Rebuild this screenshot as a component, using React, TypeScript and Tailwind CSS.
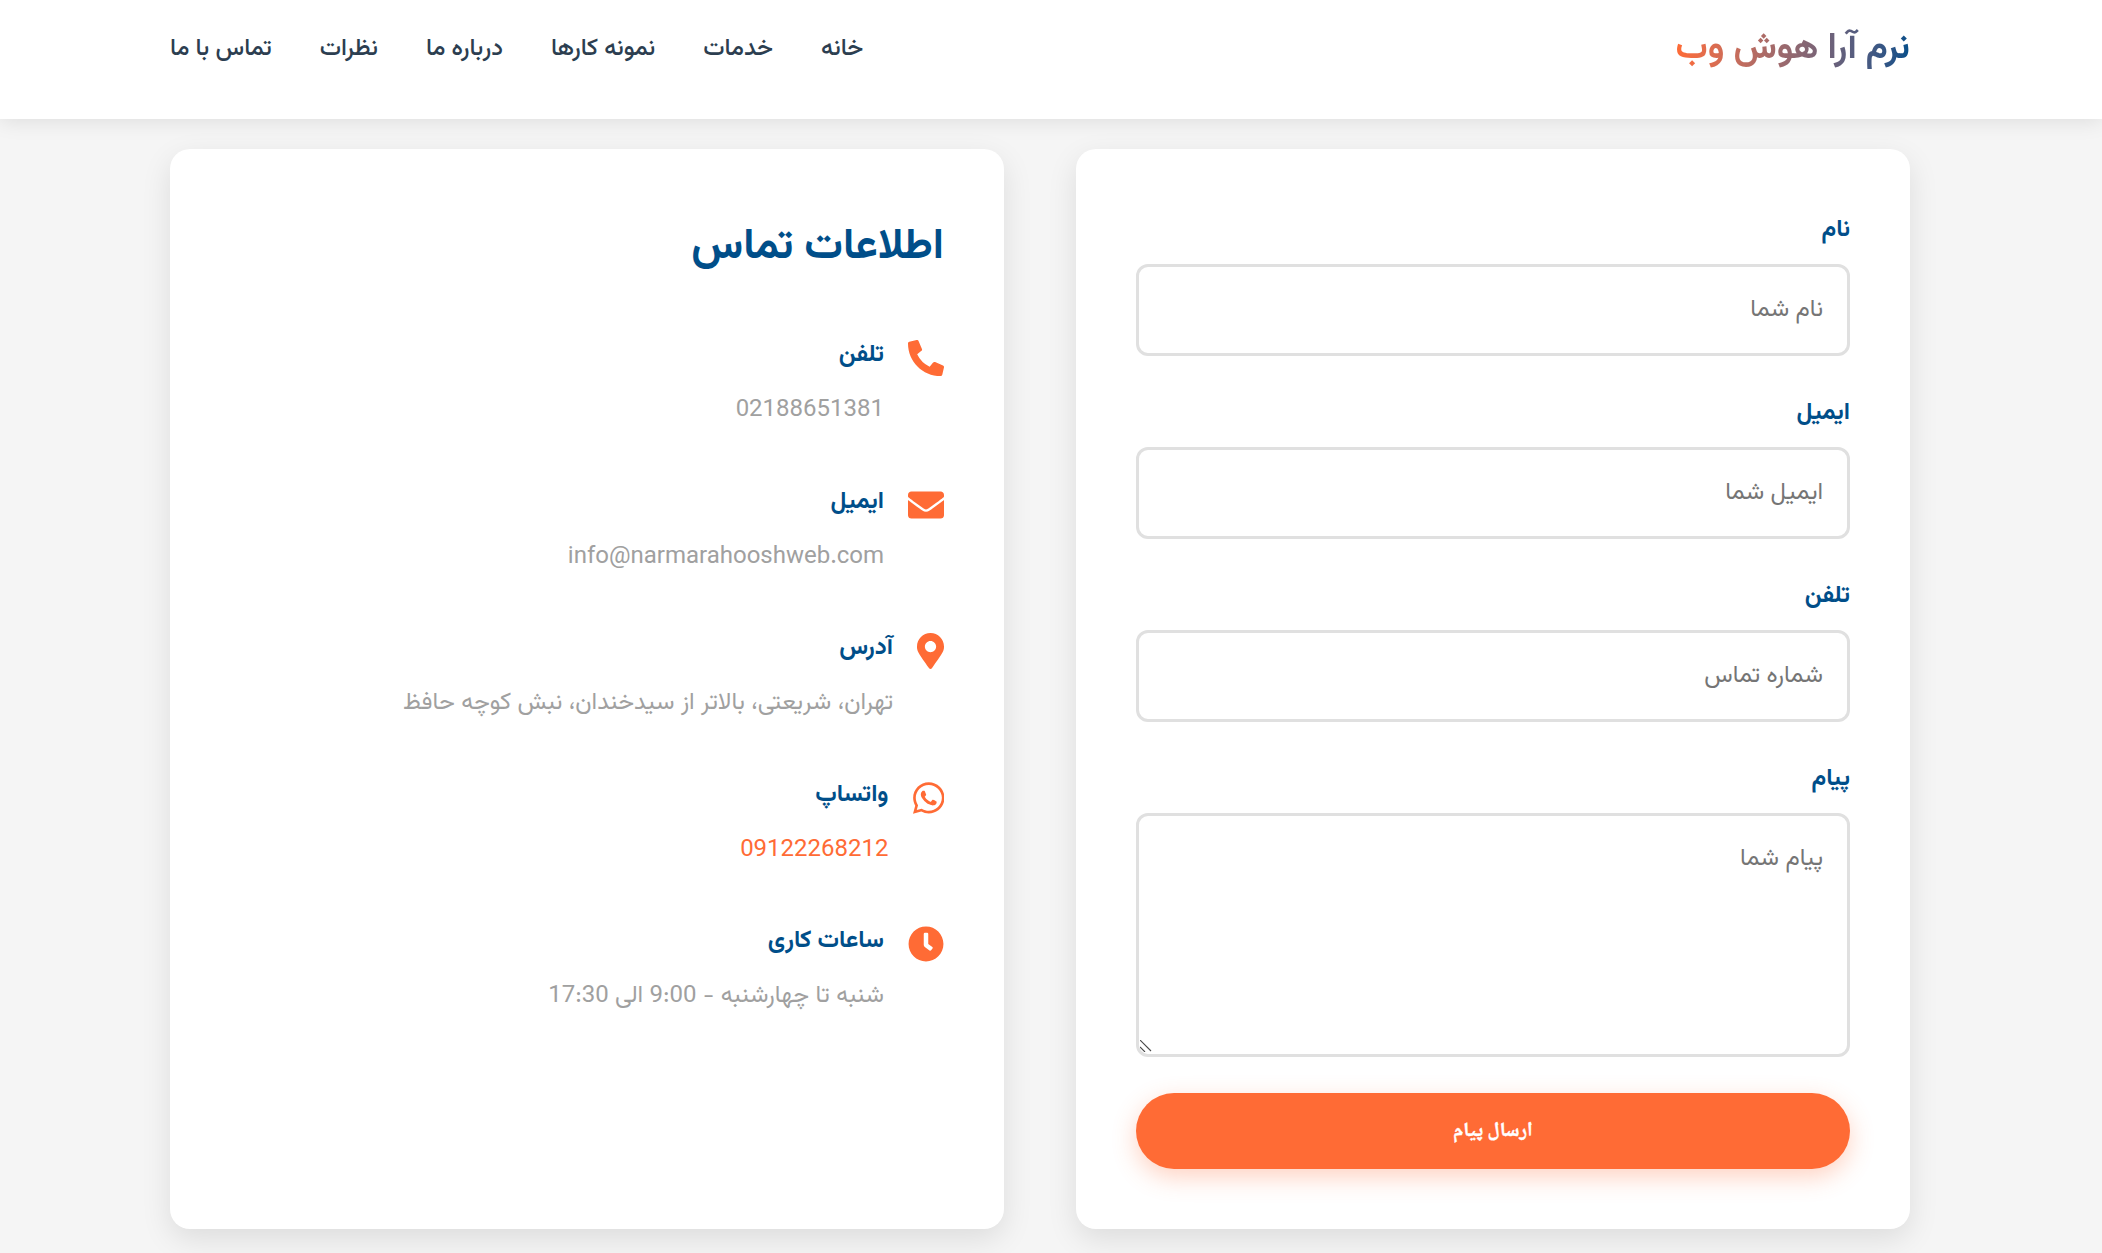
import React from "react";
import { FaPhoneAlt, FaEnvelope, FaMapMarkerAlt, FaWhatsapp, FaClock } from "react-icons/fa";

const nav = ["خانه", "خدمات", "نمونه کارها", "درباره ما", "نظرات", "تماس با ما"];

function Field({ label, placeholder, area }: { label: string; placeholder: string; area?: boolean }) {
  return (
    <div className="mb-[36px]">
      <label className="block mb-[12px] text-[24px] leading-[43px] font-bold text-[#004e89]">{label}</label>
      {area ? (
        <div className="relative">
          <textarea
            placeholder={placeholder}
            className="block w-full h-[244px] border-[3px] border-[#e0e0e0] rounded-[12px] px-[24px] py-[24px] text-[24px] leading-[38px] bg-white outline-none resize-none placeholder:text-[#757575]"
          />
          <svg className="absolute left-[4px] bottom-[5px] w-[12px] h-[12px]" viewBox="0 0 12 12" fill="none" stroke="#4a4a4a" strokeWidth="1.1">
            <path d="M0 0L11 11M0 7L5 12" />
          </svg>
        </div>
      ) : (
        <input
          placeholder={placeholder}
          className="block w-full h-[92px] border-[3px] border-[#e0e0e0] rounded-[12px] px-[24px] text-[24px] bg-white outline-none placeholder:text-[#757575]"
        />
      )}
    </div>
  );
}

function Info({ icon, title, value, accent }: { icon: React.ReactNode; title: string; value: string; accent?: boolean }) {
  return (
    <div className="flex items-start gap-[24px] mb-[36px] h-[110.5px]">
      <div className="text-[#ff6b35] mt-[6px] leading-none shrink-0">{icon}</div>
      <div>
        <h4 className="text-[24px] leading-[43px] font-bold text-[#004e89] mb-[13px]">{title}</h4>
        <p className={"text-[24px] leading-[40px] " + (accent ? "text-[#ff6b35]" : "text-[#a0a0a0]")}>{value}</p>
      </div>
    </div>
  );
}

export default function App() {
  return (
    <div dir="rtl" className="min-h-[1253px] bg-[#f5f5f5] font-['Vazirmatn','Roboto','DejaVu_Sans',sans-serif] overflow-hidden">
      <header className="h-[119px] bg-white shadow-[0_2px_20px_rgba(0,0,0,0.1)] pr-[192px] pl-[170px] pb-[22px] flex items-center justify-between relative">
        <div className="text-[36px] font-bold bg-gradient-to-l from-[#004e89] to-[#ff6b35] bg-clip-text text-transparent">نرم آرا هوش وب</div>
        <nav className="flex gap-[48px]">
          {nav.map((n) => (
            <a key={n} className="text-[24px] font-medium text-[#2c3e50]">{n}</a>
          ))}
        </nav>
      </header>
      <main className="pr-[192px] pl-[170px] pt-[30px] grid grid-cols-2 gap-[72px]">
        <section className="h-[1080px] bg-white rounded-[20px] shadow-[0_10px_30px_rgba(0,0,0,0.1)] p-[60px]">
          <Field label="نام" placeholder="نام شما" />
          <Field label="ایمیل" placeholder="ایمیل شما" />
          <Field label="تلفن" placeholder="شماره تماس" />
          <Field label="پیام" placeholder="پیام شما" area />
          <button className="w-full h-[76px] pt-[2px] rounded-[50px] bg-[#ff6b35] text-white font-bold text-[20px] font-['Noto_Naskh_Arabic','Liberation_Sans',serif] [-webkit-text-stroke:0.4px_white] shadow-[0_8px_25px_rgba(255,107,53,0.3)]">ارسال پیام</button>
        </section>
        <section className="h-[1080px] bg-white rounded-[20px] shadow-[0_10px_30px_rgba(0,0,0,0.1)] p-[60px]">
          <h3 className="mt-[3px] text-[43.2px] leading-[72px] font-bold text-[#004e89] mb-[50px]">اطلاعات تماس</h3>
          <Info icon={<FaPhoneAlt className="w-[36px] h-[36px]" />} title="تلفن" value="02188651381" />
          <Info icon={<FaEnvelope className="w-[36px] h-[36px]" />} title="ایمیل" value="info@narmarahooshweb.com" />
          <Info icon={<FaMapMarkerAlt className="w-[27px] h-[36px]" />} title="آدرس" value="تهران، شریعتی، بالاتر از سیدخندان، نبش کوچه حافظ" />
          <Info icon={<FaWhatsapp className="w-[31.5px] h-[36px]" />} title="واتساپ" value="09122268212" accent />
          <Info icon={<FaClock className="w-[36px] h-[36px]" />} title="ساعات کاری" value="شنبه تا چهارشنبه - 9:00 الی 17:30" />
        </section>
      </main>
    </div>
  );
}
